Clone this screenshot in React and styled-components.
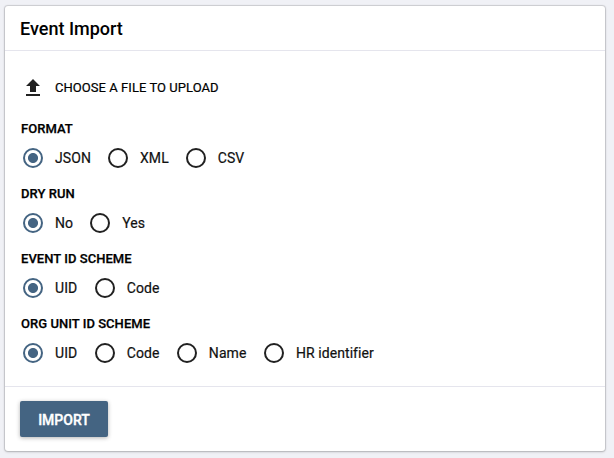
import React, { useState } from "react";
import styled, { createGlobalStyle } from "styled-components";

const GlobalStyle = createGlobalStyle`
  * { box-sizing: border-box; }
  html, body { margin: 0; background: #f0f1f6; }
  body { font-family: Roboto, sans-serif; color: #000; }
`;

const Page = styled.main`
  height: 458px;
  padding: 6px 9px 7px 5px;
  overflow: hidden;
`;

const Card = styled.section`
  display: flex;
  flex-direction: column;
  height: 445px;
  background: #fff;
  border-radius: 3px;
  box-shadow: 0 0 1px 1px rgba(0, 0, 0, 0.14), 0 1px 3px rgba(0, 0, 0, 0.16);
`;

const Header = styled.header`
  height: 45px;
  padding-left: 15px;
  border-bottom: 1px solid #e5e5ed;
`;

const Title = styled.h1`
  margin: 0;
  font-size: 18px;
  line-height: 46px;
  font-weight: 500;
`;

const Body = styled.form`
  flex: 1;
  padding: 25px 16px 0;
`;

const Upload = styled.button`
  display: flex;
  align-items: center;
  gap: 10px;
  height: 24px;
  padding: 0;
  border: 0;
  background: none;
  font: 400 13px/24px Roboto, sans-serif;
  letter-spacing: 0.05px;
  -webkit-text-stroke: 0.2px currentColor;
  color: #000;
`;

const UploadIcon = styled.svg`
  fill: #212121;
  stroke: none;
`;

const Group = styled.fieldset`
  height: 65px;
  margin: 0;
  padding: 0;
  border: 0;
  &:first-of-type { margin-top: 19px; }
`;

const Label = styled.div`
  height: 29px;
  font-size: 13px;
  line-height: 20px;
  font-weight: 500;
  letter-spacing: 0.04px;
  -webkit-text-stroke: 0.25px currentColor;
`;

const Options = styled.div`
  display: flex;
  gap: ${(p) => p.$gap}px;
`;

const Option = styled.label`
  display: flex;
  align-items: center;
  gap: 12px;
  height: 20px;
  font-size: 14px;
  line-height: 20px;
  letter-spacing: 0.08px;
  font-variant-ligatures: none;
  -webkit-text-stroke: 0.2px currentColor;
  color: #111;
`;

const Radio = styled.input`
  appearance: none;
  width: 20px;
  height: 20px;
  margin: 0 0 0 2px;
  border: 2px solid ${(p) => (p.checked ? "#446482" : "#212121")};
  border-radius: 50%;
  background: ${(p) => (p.checked ? "radial-gradient(circle, #446482 4.6px, transparent 5.4px)" : "none")};
`;

const Footer = styled.footer`
  height: 65px;
  padding: 14px 15px;
  border-top: 1px solid #e5e5ed;
`;

const ImportButton = styled.button`
  width: 88px;
  height: 36px;
  padding: 0;
  border: 0;
  border-radius: 2px;
  background: #446482;
  box-shadow: 0 1px 4px rgba(0, 0, 0, 0.3);
  color: #fff;
  font: 500 14px/38px Roboto, sans-serif;
  -webkit-text-stroke: 0.35px currentColor;
`;

const groups = [
  { label: "FORMAT", options: ["JSON", "XML", "CSV"], gap: 15 },
  { label: "DRY RUN", options: ["No", "Yes"], gap: 15 },
  { label: "EVENT ID SCHEME", options: ["UID", "Code"], gap: 15.4 },
  { label: "ORG UNIT ID SCHEME", options: ["UID", "Code", "Name", "HR identifier"], gap: 15.4 },
];

function RadioGroup({ label, options, gap }) {
  const [value, setValue] = useState(options[0]);
  return (
    <Group>
      <Label>{label}</Label>
      <Options $gap={gap}>
        {options.map((o) => (
          <Option key={o}>
            <Radio type="radio" name={label} checked={value === o} onChange={() => setValue(o)} />
            {o}
          </Option>
        ))}
      </Options>
    </Group>
  );
}

export default function App() {
  return (
    <Page>
      <GlobalStyle />
      <Card>
        <Header><Title>Event Import</Title></Header>
        <Body>
          <Upload type="button">
            <UploadIcon width="24" height="24" viewBox="0 0 24 24">
              <path d="M9 16h6v-6h4l-7-7-7 7h4zm-4 2h14v2H5z" />
            </UploadIcon>
            CHOOSE A FILE TO UPLOAD
          </Upload>
          {groups.map((g) => <RadioGroup key={g.label} {...g} />)}
        </Body>
        <Footer><ImportButton>IMPORT</ImportButton></Footer>
      </Card>
    </Page>
  );
}
